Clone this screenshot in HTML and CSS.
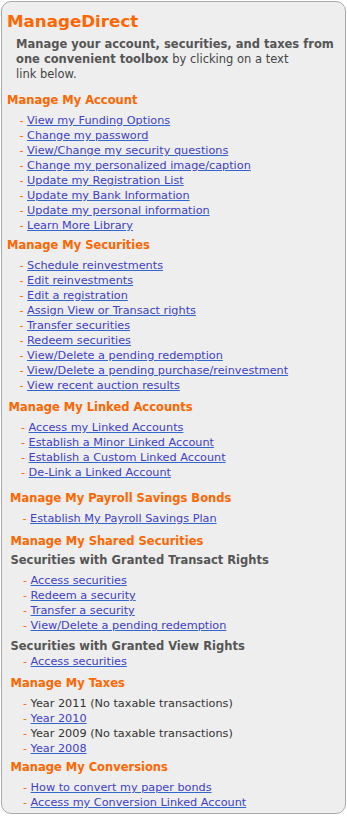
FILE: index.html
```html
<!DOCTYPE html>
<html>
<head>
<meta charset="utf-8">
<link rel="stylesheet" href="styles.css">
</head>
<body>
<div class="box">
  <h1 class="title">ManageDirect</h1>
  <p class="intro"><b>Manage your account, securities, and taxes from<br>one convenient toolbox</b> by clicking on a text<br>link below.</p>

  <section class="sec sec-account">
    <h2 class="head">Manage My Account</h2>
    <ul class="list">
      <li><a href="#">View my Funding Options</a></li>
      <li><a href="#">Change my password</a></li>
      <li><a href="#">View/Change my security questions</a></li>
      <li><a href="#">Change my personalized image/caption</a></li>
      <li><a href="#">Update my Registration List</a></li>
      <li><a href="#">Update my Bank Information</a></li>
      <li><a href="#">Update my personal information</a></li>
      <li><a href="#">Learn More Library</a></li>
    </ul>
  </section>

  <section class="sec sec-securities">
    <h2 class="head">Manage My Securities</h2>
    <ul class="list">
      <li><a href="#">Schedule reinvestments</a></li>
      <li><a href="#">Edit reinvestments</a></li>
      <li><a href="#">Edit a registration</a></li>
      <li><a href="#">Assign View or Transact rights</a></li>
      <li><a href="#">Transfer securities</a></li>
      <li><a href="#">Redeem securities</a></li>
      <li><a href="#">View/Delete a pending redemption</a></li>
      <li><a href="#">View/Delete a pending purchase/reinvestment</a></li>
      <li><a href="#">View recent auction results</a></li>
    </ul>
  </section>

  <section class="sec sec-linked">
    <h2 class="head">Manage My Linked Accounts</h2>
    <ul class="list">
      <li><a href="#">Access my Linked Accounts</a></li>
      <li><a href="#">Establish a Minor Linked Account</a></li>
      <li><a href="#">Establish a Custom Linked Account</a></li>
      <li><a href="#">De-Link a Linked Account</a></li>
    </ul>
  </section>

  <section class="sec sec-payroll">
    <h2 class="head">Manage My Payroll Savings Bonds</h2>
    <ul class="list">
      <li><a href="#">Establish My Payroll Savings Plan</a></li>
    </ul>
  </section>

  <section class="sec sec-shared">
    <h2 class="head">Manage My Shared Securities</h2>
    <h3 class="sub sub-transact">Securities with Granted Transact Rights</h3>
    <ul class="list">
      <li><a href="#">Access securities</a></li>
      <li><a href="#">Redeem a security</a></li>
      <li><a href="#">Transfer a security</a></li>
      <li><a href="#">View/Delete a pending redemption</a></li>
    </ul>
    <h3 class="sub sub-view">Securities with Granted View Rights</h3>
    <ul class="list list-tight">
      <li><a href="#">Access securities</a></li>
    </ul>
  </section>

  <section class="sec sec-taxes">
    <h2 class="head">Manage My Taxes</h2>
    <ul class="list">
      <li><span class="plain">Year 2011 (No taxable transactions)</span></li>
      <li><a href="#">Year 2010</a></li>
      <li><span class="plain">Year 2009 (No taxable transactions)</span></li>
      <li><a href="#">Year 2008</a></li>
    </ul>
  </section>

  <section class="sec sec-conv">
    <h2 class="head">Manage My Conversions</h2>
    <ul class="list">
      <li><a href="#">How to convert my paper bonds</a></li>
      <li><a href="#">Access my Conversion Linked Account</a></li>
    </ul>
  </section>
</div>
</body>
</html>
```

FILE: styles.css
```css
html, body {
  margin: 0;
  padding: 0;
  background: #ffffff;
}

body {
  font-family: "DejaVu Sans", Verdana, sans-serif;
  font-size: 11.25px;
  line-height: 15px;
  color: #333333;
}

.box {
  box-sizing: border-box;
  width: 345px;
  margin: 1px 0 0 1px;
  padding: 9px 4px 3px 5px;
  background: #eeeeee;
  border: 1px solid #aaaaaa;
  border-radius: 10px;
}

.title {
  margin: 0;
  font-size: 16.7px;
  line-height: 20px;
  font-weight: bold;
  color: #ff6600;
}

.intro {
  margin: 6px 0 0 9px;
  font-size: 11.5px;
  color: #444444;
  white-space: nowrap;
}

.intro b {
  font-size: 11.5px;
  color: #555555;
}

.head {
  margin: 0;
  font-size: 11.5px;
  line-height: 15px;
  font-weight: bold;
  color: #ff6600;
}

.sub {
  margin: 0;
  font-size: 11.5px;
  line-height: 15px;
  font-weight: bold;
  color: #555555;
}

.list {
  list-style: none;
  margin: 5px 0 0 0;
  padding: 0 0 0 12.5px;
}

.list li {
  white-space: nowrap;
}

.list li::before {
  content: "-";
  color: #ff6600;
  margin-right: 3.5px;
}

.list a {
  color: #4040c8;
  text-decoration: underline;
  text-decoration-color: #3366cc;
}

.plain {
  color: #333333;
}

.sec-account { margin-top: 11px; }
.sec-securities { margin-top: 5px; }
.sec-linked { margin-top: 7px; padding-left: 1.5px; }
.sec-payroll { margin-top: 11px; padding-left: 3px; }
.sec-shared { margin-top: 8px; padding-left: 3.5px; }
.sec-taxes { margin-top: 7px; padding-left: 3.5px; }
.sec-conv { margin-top: 4px; padding-left: 3.5px; }

.sub-transact { margin-top: 4px; }
.sub-view { margin-top: 6px; }
.list-tight { margin-top: 0; }
```
